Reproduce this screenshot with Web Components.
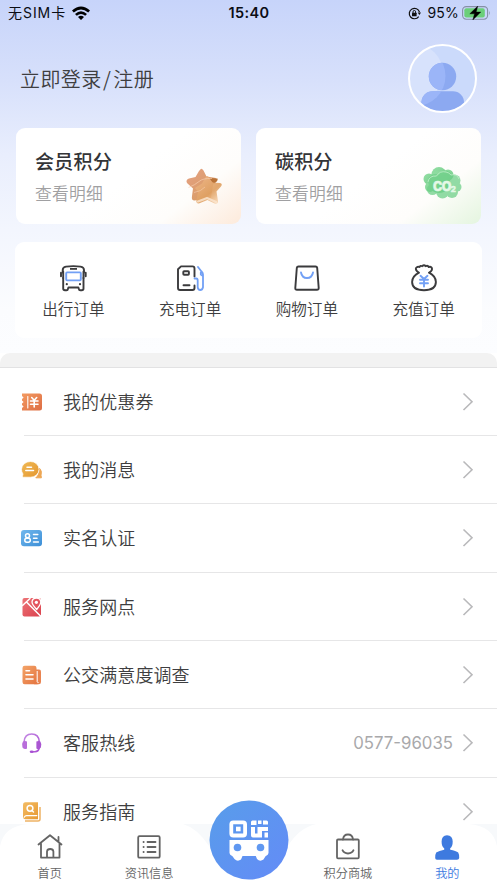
<!DOCTYPE html>
<html lang="zh-CN">
<head>
<meta charset="utf-8">
<title>我的</title>
<style>
html,body{margin:0;height:100%;overflow:hidden}
body{font-family:Inter,"Noto Sans CJK SC",sans-serif;color:#3e3e40;background:#fff}
</style>
</head>
<body>
<profile-page>
  <status-bar slot="status"></status-bar>
  <user-header slot="top">立即登录<span style="margin:0 2px 0 1.5px">/</span>注册</user-header>
  <points-card slot="cards" tint="#fdeadb" icon="star">会员积分<span slot="sub">查看明细</span></points-card>
  <points-card slot="cards" tint="#e4f5df" icon="co2">碳积分<span slot="sub">查看明细</span></points-card>
  <order-item slot="orders" icon="bus">出行订单</order-item>
  <order-item slot="orders" icon="charge">充电订单</order-item>
  <order-item slot="orders" icon="bag">购物订单</order-item>
  <order-item slot="orders" icon="money">充值订单</order-item>
  <list-row slot="rows" icon="coupon">我的优惠券</list-row>
  <list-row slot="rows" icon="chat">我的消息</list-row>
  <list-row slot="rows" icon="idcard">实名认证</list-row>
  <list-row slot="rows" icon="map">服务网点</list-row>
  <list-row slot="rows" icon="news">公交满意度调查</list-row>
  <list-row slot="rows" icon="headset">客服热线<span slot="value">0577-96035</span></list-row>
  <list-row slot="rows" icon="guide">服务指南</list-row>
  <tab-bar slot="tabs">
    <tab-item icon="home">首页</tab-item>
    <tab-item icon="info">资讯信息</tab-item>
    <scan-button></scan-button>
    <tab-item icon="mall">积分商城</tab-item>
    <tab-item icon="me" active>我的</tab-item>
  </tab-bar>
</profile-page>
<script>
const svg = (w, h, body, vb) => `<svg width="${w}" height="${h}" viewBox="${vb || `0 0 ${w} ${h}`}" fill="none" style="display:block">${body}</svg>`;
const grad = (id, a, b) => `<defs><linearGradient id="${id}" x1="0" y1="0" x2="1" y2="1"><stop stop-color="${a}"/><stop offset="1" stop-color="${b}"/></linearGradient></defs>`;
const D = 'stroke="#3b3b3d" stroke-width="1.9" stroke-linejoin="round" stroke-linecap="round"';
const B = 'stroke="#72a0f5" stroke-width="1.9" stroke-linejoin="round" stroke-linecap="round"';
const G = 'stroke="#646464" stroke-width="1.8" stroke-linejoin="round" stroke-linecap="round"';
const W = 'stroke="#fff" stroke-linecap="round" stroke-linejoin="round"';
const ICONS = {
  star: svg(40, 40, `<defs><linearGradient id="s1" x1="0" y1="0" x2="1" y2="1"><stop stop-color="#e5a184"/><stop offset="1" stop-color="#d59b5d"/></linearGradient><linearGradient id="s2" x1="0" y1="0" x2=".8" y2="1"><stop stop-color="#efb98c"/><stop offset=".65" stop-color="#dfa062"/><stop offset="1" stop-color="#f8d8b6"/></linearGradient></defs>
    <path d="M17.800 4Q19 3.400 20.500 5.500L23.500 11.500 33 13 30 20 28 33 21 34 11.500 35.500Q8.200 35.500 9 31L10 23.500 4 18Q2.300 15 6 13.500L12.500 12 16 6Z" fill="url(#s1)"/>
    <path d="M26 13L34.500 13.500Q35.500 15.500 31 19Z" fill="#b97338"/>
    <path d="M23 11.500Q24.500 10 26 12.500L29 17.500 37 18Q40 18.700 38 21.500L33.500 26.500 35 36Q35.200 39.500 31.500 38.500L24.500 35 16.500 38.300Q12.800 39 13.500 35L15 27 12 23 19 18.500Z" fill="url(#s2)" opacity=".92"/>
    <path d="M5.500 22.500Q12 20 16 16.500T29 13.500" stroke="#f8d1b4" stroke-width=".8" opacity=".8"/><path d="M11 27.500Q18 26.500 22 22" stroke="#f8d1b4" stroke-width=".8" opacity=".7"/>
    <path d="M15 36.500L24 33 33 37" stroke="#fbe6d1" stroke-width="2.200" stroke-linecap="round" stroke-linejoin="round" opacity=".8"/>`),
  co2: svg(42, 36, `<defs><linearGradient id="c1" x1="0" y1="0" x2="1" y2="1"><stop stop-color="#94dfa5"/><stop offset="1" stop-color="#76cd8b"/></linearGradient></defs>
    <g fill="url(#c1)"><circle cx="18" cy="9.500" r="7.500"/><circle cx="8" cy="14" r="5.500"/><circle cx="27" cy="10" r="5.500"/><circle cx="18" cy="17" r="11"/><circle cx="9" cy="22" r="5"/></g>
    <g opacity=".75"><g fill="#6fd089"><circle cx="14" cy="16" r="7"/><circle cx="24" cy="13" r="7.500"/><circle cx="33.500" cy="15.500" r="6"/><circle cx="36" cy="22" r="4.500"/><circle cx="31" cy="27" r="6"/><circle cx="21.500" cy="27" r="6.500"/><circle cx="11.500" cy="24.500" r="5.500"/><circle cx="25" cy="20" r="10"/></g></g>
    <path d="M7 17Q8 10.500 15.500 11Q19 5.500 25 7Q28 7.500 30 10Q36 8.500 38 14" stroke="#c1efca" stroke-width=".8"/>
    <text x="12" y="25.500" font-family="Inter" font-size="12.500" font-weight="800" fill="#e4f8e7" stroke="#e4f8e7" stroke-width=".5" letter-spacing="-.6">CO<tspan font-size="8" dy="1.500">2</tspan></text>`),
  bus: svg(28, 28, `<path d="M3.700 8.500V6Q3.700 3.200 7 2.600 14.400 1.600 21.500 2.600 25 3.200 25 6V8.500M4.200 14V24.500Q4.200 26.200 6 26.200H7.500Q8.800 26.200 9 24.800L9.400 23.500H19.400L19.800 24.800Q20 26.200 21.300 26.200H22.800Q24.500 26.200 24.500 24.500V14" ${D} /><path d="M4.200 14V7.500M24.500 14V7.500M2 8.800V12.200M26.700 8.800V12.200" ${D}/><path d="M11 4.900H18" stroke="#3b3b3d" stroke-width="1.800"/><rect x="7.200" y="8.400" width="14.600" height="8" rx=".8" ${B} /><circle cx="7.800" cy="20.200" r="1.100" fill="#3b3b3d"/><circle cx="21" cy="20.200" r="1.100" fill="#3b3b3d"/>`),
  charge: svg(28, 28, `<path d="M18.500 12.500V4.500Q18.500 2.400 16.500 2.400H5L2 5.200V24Q2 26 4 26H16.500Q18.500 26 18.500 24V21.500" ${D}/><rect x="7.300" y="7.200" width="5.600" height="3.600" rx=".8" ${D}/><path d="M7.500 21.200H13.500" ${D}/><path d="M18.500 14.500H20.200Q21.700 14.600 21.700 16.500V23.200Q22 26 24.200 26T27 23.200V10.500Q27 9 25.500 7.500L22 3M24.800 8.500V10.500L27 12" stroke="#72a0f5" stroke-width="1.800" stroke-linecap="round" stroke-linejoin="round"/>`),
  bag: svg(28, 28, `<path d="M5.500 2.500H22.500Q24 2.500 24.200 4L25.700 24Q25.700 25.800 24 25.800H4Q2.200 25.800 2.300 24L3.800 4Q4 2.500 5.500 2.500Z" ${D}/><path d="M8 8.500Q9 14 14 14T20 8.500" ${B}/>`),
  money: svg(28, 28, `<path d="M9 8.700L7 7.200Q4.800 4.500 6.800 3.200 8 2.300 9.500 3Q10.500 1.200 12.200 2.200 14 .2 15.700 2.200 17.800 1.200 18.700 3 20.400 2.300 21.400 3.300 22.800 5 21 7.200L19 8.700Q25.700 12 25.900 18 25.800 26.200 14 26.300 2.200 26.200 2.100 18 2.300 12 9 8.700Z" ${D}/><path d="M10.500 11.800L14 15 17.500 11.800M10 15.700H18M10 19.300H18M14 15.500V22.500" ${B}/>`),
  coupon: svg(22, 22, grad('cp', '#f39a61', '#dd6d43') + `<path d="M1 2.500H18.500Q21 2.500 21 5V17Q21 19.500 18.500 19.500H1V17L2.600 15.500 1 14V12.500L2.600 11 1 9.500V8L2.600 6.500 1 5Z" fill="url(#cp)"/><path d="M6.800 5.500V17" ${W} stroke-width="1.100" /><path d="M10.700 6.500L13.200 9.300 15.700 6.500M9.500 10H17M9.500 13.300H17M13.200 9.500V16" ${W} stroke-width="1.600"/>`),
  chat: svg(22, 22, grad('ch', '#f0ba55', '#e4962f') + `<path d="M18.300 9Q21.500 12 20 16.200L20.400 18.800H14.800Q18.700 16 18.300 9Z" fill="#eda653" stroke="#eda653" stroke-linejoin="round"/><path d="M9.500 2.500A8.500 7.800 0 0 1 9.500 18.200H2Q1 18.200 1.600 16.800L2 15Q.5 13 .5 10.300A9 7.800 0 0 1 9.500 2.500Z" fill="url(#ch)" stroke="#fff" stroke-width=".7"/><path d="M6 8.200H10.500M4.800 11.500H12.500" ${W} stroke-width="1.500"/>`),
  idcard: svg(22, 22, grad('id', '#72b8ed', '#3d8fd7') + `<rect x="0" y="3" width="21" height="16.300" rx="3" fill="url(#id)"/><circle cx="6.500" cy="8.800" r="2" ${W} stroke-width="1.500"/><rect x="3.800" y="11.300" width="5.500" height="3.900" rx="1.900" ${W} stroke-width="1.500"/><path d="M12.500 7.500H16.800M12.500 11.200H16M12.500 14.900H17.400" ${W} stroke-width="1.500"/>`),
  map: svg(22, 22, grad('mp', '#ed7477', '#da414d') + `<rect x="1.500" y="2" width="18.500" height="18.500" rx="2" fill="url(#mp)"/><path d="M1.500 9.500L9 2.500M5.500 6L19.500 20" ${W} stroke-width="1.500"/><path d="M15.700 13.500Q11 8.500 11 6 11.500 2 15.500 2 19.500 2 19.800 6 19.800 8.500 15.700 13.500Z" fill="#e4555f" ${W} stroke-width="1.300"/><circle cx="15.400" cy="6.300" r="1.600" fill="#fff"/>`),
  news: svg(22, 22, grad('nw', '#f3a468', '#e4733f') + `<path d="M14.500 5.500H18Q20 5.500 20 7.500V18Q20 20.200 17.800 20.200H13Z" fill="#e98451"/><path d="M1.500 4Q1.500 1.800 3.700 1.800H13.300Q15.500 1.800 15.500 4V18Q15.500 20.200 17 20.200H3.700Q1.500 20.200 1.500 18Z" fill="url(#nw)"/><path d="M16.200 7V17.800Q16.500 18.800 17.500 18.500" stroke="#fff" stroke-width="1"/><path d="M5 6.700H8.500M5 10.800H12M5 15H12" ${W} stroke-width="1.600"/>`),
  headset: svg(22, 22, grad('hs', '#c58be4', '#a84ed2') + `<path d="M3.200 11V9.500Q3.700 2 10.700 2T18.200 9.500V16Q17.500 19.500 14 19.700H11" stroke="url(#hs)" stroke-width="1.600" stroke-linecap="round"/><path d="M2 9.500Q4 8.500 6 9.500V16.500Q3.500 18 1.500 15.500Q.3 12 2 9.500Z" fill="#b96edb"/><path d="M19.400 9.500Q17.400 8.500 15.400 9.500V16.500Q17.900 18 19.900 15.500Q21.100 12 19.400 9.500Z" fill="#aa56d2"/><ellipse cx="10.700" cy="19.700" rx="2" ry="1.300" fill="#a850d3"/>`),
  guide: svg(22, 22, grad('gd', '#f3bc64', '#e79932') + `<path d="M4 20H17Q19 20 19 18V6" stroke="#eeb264" stroke-width="1.500"/><path d="M4 1.300H17V18.300H4Q2 18 2 16V3.500Q2 1.500 4 1.300Z" fill="url(#gd)"/><path d="M3.200 16.200Q4 14.600 5.500 14.600H15.800" ${W} stroke-width="1.200"/><circle cx="9" cy="7.300" r="2.900" ${W} stroke-width="1.500"/><path d="M11 9.500L12.500 11" ${W} stroke-width="1.500"/>`),
  home: svg(28, 28, `<path d="M2.500 12.500L14 3.200 25.500 12.500M5 11.500V25.600H23.500V11M22.500 9.500V5" ${G}/><path d="M11 25V19.500Q11.300 17 14.200 17T17.400 19.500V25" ${G}/>`),
  info: svg(28, 28, `<rect x="3.200" y="4.200" width="21.500" height="21.500" rx="1.300" ${G}/><path d="M12.500 10H20.500M12.500 15H20.500M12.500 20H20.500M8.500 10H8.700M8.500 15H8.700M8.500 20H8.700" ${G}/>`),
  mall: svg(28, 28, `<rect x="3" y="7.500" width="21.800" height="18.800" rx="1" ${G}/><path d="M9 7.500Q9.500 2.500 14 2.500T19 7.500M8.500 18.200Q10 21.500 14 21.500T19.500 18.200" ${G}/>`),
  me: svg(28, 28, `<path d="M14 3.300Q19.700 3.800 19.700 9.500 19.700 14.500 17.200 16.300V17.800Q23 18.800 25.200 20.600 26.300 22.500 26.200 26 26 27.800 24 27.800H4Q2.200 27.800 2.200 26 2.100 22.500 3.200 20.600 6 18.800 11.200 17.800V16.300Q8.600 14.500 8.600 9.500 8.600 3.800 14 3.300Z" fill="#3e7adf"/>`),
  arrow: svg(12, 20, `<path d="M1.500 1.500L10 9.700 1.500 18" stroke="#b9b9bb" stroke-width="1.600"/>`)
};
const define = (name, html) => customElements.define(name, class extends HTMLElement {
  constructor() {
    super();
    this.attachShadow({mode: 'open'}).innerHTML = typeof html === 'function' ? html(this) : html;
  }
});

define('app-icon', el => `<style>:host{display:block;flex:none}</style>${ICONS[el.getAttribute('name')]}`);

define('status-bar', `<style>
:host{display:grid;grid-template-columns:1fr auto 1fr;align-items:center;height:26px;padding:0 7px 0 8px;color:#0b0d14;font-size:14px;line-height:26px}
.l,.r{display:flex;align-items:center}.r{justify-content:flex-end}
.l{gap:6px}.sim{letter-spacing:.95px}.time{font-weight:600;font-size:14.5px;letter-spacing:.4px}
.lock{margin-right:6px}.pct{margin-right:3px;letter-spacing:.2px}
</style>
<div class="l"><span class="sim">无SIM卡</span>${svg(18, 14, '<path d="M0 4.600Q9-3.400 18 4.600L16.200 6.600Q9 .6 1.800 6.600Z M3 7.900Q9 2.600 15 7.900L13.200 9.800Q9 6.200 4.800 9.800Z M6 11Q9 8.400 12 11L9 14Z" fill="#000"/>')}</div>
<span class="time">15:40</span>
<div class="r"><span class="lock">${svg(13, 13, '<path d="M10.700 9.600A5.200 5.200 0 1 1 11.500 5.200" stroke="#111" stroke-width="1.200"/><path d="M9.700 5.500H13L11.400 8Z" fill="#111"/><rect x="4" y="5.800" width="4.600" height="3.500" rx=".5" fill="#111"/><path d="M5 6V4.800Q5 3.500 6.300 3.500T7.600 4.800V6" stroke="#111"/>')}</span><span class="pct">95%</span>${svg(28, 14, '<rect x=".6" y=".6" width="25" height="12.600" rx="3.600" stroke="#8690a5" stroke-width="1.100"/><path d="M27 5Q28.300 7 27 9Z" fill="#8690a5"/><rect x="2.300" y="2.300" width="20.500" height="9.200" rx="2" fill="#6bcf79"/><path d="M15.800 0L7.800 7.800H12.500L10.800 14 18.800 6H14.200Z" fill="#000" stroke="#000" stroke-width=".4"/>')}</div>`);

define('user-header', `<style>
:host{display:flex;justify-content:space-between;align-items:center;padding:18px 20px 15px;height:69px;font-size:20px;letter-spacing:.4px;font-family:"Noto Sans CJK SC",sans-serif;font-weight:350}
</style><span><slot></slot></span>
${svg(69, 69, `<defs><clipPath id="a"><circle cx="34.500" cy="34.500" r="33"/></clipPath></defs><circle cx="34.500" cy="34.500" r="33.500" fill="#cbdafb"/>
<g clip-path="url(#a)"><circle cx="6" cy="29" r="29" fill="#d7e2fc"/><circle cx="34.500" cy="32.500" r="13.700" fill="#8ca9f1"/><rect x="13.500" y="47.300" width="42.500" height="26" rx="11" fill="#8ca9f1"/>
<clipPath id="b"><circle cx="34.500" cy="32.500" r="13.700"/><rect x="13.500" y="47.300" width="42.500" height="26" rx="11"/></clipPath><circle cx="7.500" cy="32" r="30" fill="#9bb5f8" clip-path="url(#b)"/></g>
<circle cx="34.500" cy="34.500" r="33.500" stroke="#fff" stroke-width="2"/>`)}`);

define('points-card', el => `<style>
:host{display:flex;box-sizing:border-box;height:96px;border-radius:9px;padding:19px 18px 0 19px;justify-content:space-between;background:linear-gradient(142deg,#fff 50%,#fefdfb 76%,${el.getAttribute('tint')} 100%);font-family:"Noto Sans CJK SC",sans-serif}
.t{font-size:19px;line-height:28px;font-weight:500;color:#333437;letter-spacing:.3px}
.s{font-size:16.800px;line-height:24px;margin-top:6px;font-weight:350;color:#a0a0a2;letter-spacing:.2px}
app-icon{margin-top:18px}
</style><div><div class="t"><slot></slot></div><div class="s"><slot name="sub"></slot></div></div><app-icon name="${el.getAttribute('icon')}"></app-icon>`);

define('order-item', el => `<style>
:host{display:flex;flex-direction:column;align-items:center;flex:1;font:350 15.600px/24px "Noto Sans CJK SC",sans-serif;color:#3e3e40}
app-icon{margin-bottom:4px}
</style><app-icon name="${el.getAttribute('icon')}"></app-icon><span><slot></slot></span>`);

define('list-row', el => `<style>
:host{display:flex;flex:none;box-sizing:border-box;height:68.350px;align-items:center;padding:0 23px 0 21px;font:350 18px/28px "Noto Sans CJK SC",sans-serif;letter-spacing:.1px;
background:linear-gradient(#e6e6e7,#e6e6e7) 24px 100%/100% 1px no-repeat}
.t{flex:1;margin-left:20px;padding-bottom:2px}
.v{font:400 16.800px/28px Inter,sans-serif;letter-spacing:0;color:#a9a9ab;margin-right:9px;padding-bottom:1px}
</style><app-icon name="${el.getAttribute('icon')}"></app-icon><span class="t"><slot></slot></span><span class="v"><slot name="value"></slot></span><app-icon name="arrow"></app-icon>`);

define('tab-item', el => `<style>
:host{display:flex;flex:1;flex-direction:column;align-items:center;font:350 12.200px/18px "Noto Sans CJK SC",sans-serif;color:${el.hasAttribute('active') ? '#3e7adf' : '#646464'}}
app-icon{margin:8px 0 4px}
</style><app-icon name="${el.getAttribute('icon')}"></app-icon><span><slot></slot></span>`);

define('scan-button', `<style>:host{display:flex;flex:1;justify-content:center;height:80px;margin-top:-24.500px}</style>
${svg(80, 80, grad('sc', '#589dea', '#648bf7') + `<circle cx="40" cy="40" r="39.500" fill="url(#sc)"/>
<rect x="22.300" y="22.300" width="13.800" height="13.200" rx="2" stroke="#fff" stroke-width="3.800"/><rect x="27" y="26.700" width="4.600" height="4.600" fill="#fff"/>
<path d="M43.500 20.500H47.500V25H42V22Q42 20.500 43.500 20.500ZM49 20.500H52.500V24H49ZM54 20.500H57.500Q59 20.500 59 22V24.500H54ZM42 27H46V33.500H48.500V27H59V31H53V37.500H44Q42 37.500 42 35.500ZM55.500 32.500H59V37.500H55.500Z" fill="#fff"/>
<path d="M20.500 40H59.500V53Q59.500 55 56.500 56.200L54.500 59.500Q51 62 48 59L46.800 56H33.500L32 59.500Q28.500 62 25.500 59L23.500 56.200Q20.500 55 20.500 53Z" fill="#fff"/>
<circle cx="28.500" cy="47.500" r="3.800" fill="#6098f1"/><circle cx="51.500" cy="47.500" r="3.800" fill="#6098f1"/>`)}`);

define('tab-bar', `<style>
:host{display:grid;flex:none;height:59px;background:#f7f9fb}
svg,.tabs{grid-area:1/1}.tabs{display:flex;z-index:1;min-width:0;height:59px}
</style>${svg(497, 59, '<path d="M0 59V22Q4 2 28 0H183Q197 4 209 22L220 32H277L288 22Q299 4 316 0H469Q493 2 497 22V59Z" fill="#fff"/>')}<div class="tabs"><slot></slot></div>`);

define('profile-page', `<style>
:host{display:flex;flex-direction:column;width:497px;height:883px;overflow:hidden;background:#fff}
.hero{flex:none;height:353px;background:linear-gradient(#c7d4fa 0,#d7e0fb 80px,#e9eefd 155px,#f3f6fe 230px,#fbfcfe 310px,#fcfdff 353px)}
.cards{display:grid;grid-template-columns:225px 225px;gap:15px;padding:0 16px}
.orders{display:flex;box-sizing:border-box;margin:18px 15px 0;height:96px;padding-top:22px;border-radius:9px;background:#fff}
.band{flex:none;box-sizing:border-box;height:14.500px;background:#f2f2f2;border-bottom:1px solid #e2e2e3;border-radius:10px 10px 0 0}
.rows{display:flex;flex-direction:column;flex:1;min-height:0;overflow:hidden}
</style>
<div class="hero"><slot name="status"></slot><slot name="top"></slot><div class="cards"><slot name="cards"></slot></div><div class="orders"><slot name="orders"></slot></div></div>
<div class="band"></div>
<div class="rows"><slot name="rows"></slot></div>
<slot name="tabs"></slot>`);
</script>
</body>
</html>
